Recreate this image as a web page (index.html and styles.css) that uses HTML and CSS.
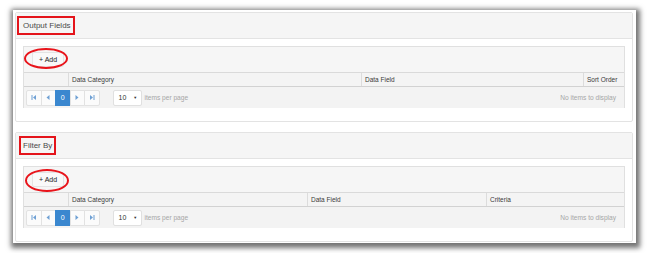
FILE: index.html
```html
<!DOCTYPE html>
<html>
<head>
<meta charset="utf-8">
<link rel="stylesheet" href="styles.css">
</head>
<body>
<div class="frame">
  <section class="panel">
    <div class="panel-head"><span class="mark mark-out">Output Fields</span></div>
    <div class="panel-body">
      <div class="grid">
        <div class="toolbar">
          <span class="add-wrap"><button class="add">+ Add</button><span class="ring"></span></span>
        </div>
        <div class="cols cols-out">
          <div class="th"></div>
          <div class="th">Data Category</div>
          <div class="th">Data Field</div>
          <div class="th">Sort Order</div>
        </div>
        <div class="pager">
          <div class="pages">
            <span class="pg"><svg width="6" height="5" viewBox="0 0 6 5"><rect x="0.5" y="0" width="1" height="5"/><path d="M5 0 L2 2.5 L5 5Z"/></svg></span>
            <span class="pg"><svg width="4" height="5" viewBox="0 0 4 5"><path d="M3.5 0 L0.5 2.5 L3.5 5Z"/></svg></span>
            <span class="pg active">0</span>
            <span class="pg"><svg width="4" height="5" viewBox="0 0 4 5"><path d="M0.5 0 L3.5 2.5 L0.5 5Z"/></svg></span>
            <span class="pg"><svg width="6" height="5" viewBox="0 0 6 5"><path d="M1 0 L4 2.5 L1 5Z"/><rect x="4.5" y="0" width="1" height="5"/></svg></span>
          </div>
          <span class="sel">10<span class="caret">▼</span></span>
          <span class="ipp">items per page</span>
          <span class="info">No items to display</span>
        </div>
      </div>
    </div>
  </section>
  <section class="panel">
    <div class="panel-head"><span class="mark mark-filter">Filter By</span></div>
    <div class="panel-body">
      <div class="grid">
        <div class="toolbar">
          <span class="add-wrap"><button class="add">+ Add</button><span class="ring ring-2"></span></span>
        </div>
        <div class="cols cols-filter">
          <div class="th"></div>
          <div class="th">Data Category</div>
          <div class="th">Data Field</div>
          <div class="th">Criteria</div>
        </div>
        <div class="pager">
          <div class="pages">
            <span class="pg"><svg width="6" height="5" viewBox="0 0 6 5"><rect x="0.5" y="0" width="1" height="5"/><path d="M5 0 L2 2.5 L5 5Z"/></svg></span>
            <span class="pg"><svg width="4" height="5" viewBox="0 0 4 5"><path d="M3.5 0 L0.5 2.5 L3.5 5Z"/></svg></span>
            <span class="pg active">0</span>
            <span class="pg"><svg width="4" height="5" viewBox="0 0 4 5"><path d="M0.5 0 L3.5 2.5 L0.5 5Z"/></svg></span>
            <span class="pg"><svg width="6" height="5" viewBox="0 0 6 5"><path d="M1 0 L4 2.5 L1 5Z"/><rect x="4.5" y="0" width="1" height="5"/></svg></span>
          </div>
          <span class="sel">10<span class="caret">▼</span></span>
          <span class="ipp">items per page</span>
          <span class="info">No items to display</span>
        </div>
      </div>
    </div>
  </section>
</div>
</body>
</html>
```

FILE: styles.css
```css
* { box-sizing: border-box; }
html, body { margin: 0; padding: 0; background: #fff; }
body {
  font-family: "Liberation Sans", Arial, sans-serif;
  color: #333;
  width: 647px;
  height: 253px;
  overflow: hidden;
}
.frame {
  margin: 10px 11px 0 13px;
  height: 233px;
  padding: 2px 3px 1px 2px;
  background: #fff;
  box-shadow: 1px 2px 5px 3px rgba(0, 0, 0, 0.55);
  display: flex;
  flex-direction: column;
  gap: 10px;
}
.panel {
  border: 1px solid #e3e3e3;
  border-radius: 2px;
  height: 110px;
  display: flex;
  flex-direction: column;
}
.panel-head {
  height: 26px;
  background: #f5f5f5;
  border-bottom: 1px solid #e3e3e3;
  display: flex;
  align-items: center;
  font-size: 8px;
  color: #4a4a4a;
}
.mark {
  border: 2px solid #e4141b;
  height: 19px;
  display: flex;
  align-items: center;
}
.mark-out { margin-left: 1px; padding: 0 2px 0 4px; }
.mark-filter { margin-left: 3px; padding: 0 2px 0 2px; }
.panel-body {
  flex: 1;
  padding: 7px 7px 0 7px;
}
.grid {
  border: 1px solid #e0e0e0;
  border-bottom: none;
}
.toolbar {
  height: 26px;
  background: #f6f6f6;
  border-bottom: 1px solid #dadada;
  display: flex;
  align-items: center;
  padding-left: 8px;
}
.add-wrap { position: relative; display: inline-flex; }
.add {
  font-family: inherit;
  font-size: 7px;
  color: #222;
  background: #f9f9f9;
  border: 1px solid #e4e4e4;
  border-radius: 2px;
  height: 15px;
  padding: 0 6px;
  margin: 0;
  line-height: 13px;
}
.ring {
  position: absolute;
  left: -8px;
  top: -4px;
  width: 44px;
  height: 21px;
  border: 2px solid #e8141b;
  border-radius: 50%;
}
.ring-2 { left: -7px; top: -3px; width: 44px; height: 23px; }
.cols {
  display: grid;
  height: 14px;
  background: #f4f4f4;
  border-bottom: 1px solid #d2d2d2;
}
.cols-out { grid-template-columns: 44px 293px 222px 1fr; }
.cols-filter { grid-template-columns: 44px 239px 179px 1fr; }
.th {
  font-size: 6.5px;
  color: #3a3a3a;
  padding-left: 3px;
  display: flex;
  align-items: center;
  border-left: 1px solid #dcdcdc;
}
.th:first-child { border-left: none; }
.pager {
  height: 21px;
  background: #f3f3f3;
  display: flex;
  align-items: center;
  padding: 0 8px 0 2px;
  font-size: 6.6px;
}
.pages { display: flex; }
.pg {
  width: 15.5px;
  height: 16px;
  background: #fbfbfb;
  border: 1px solid #e2e2e2;
  margin-left: -1px;
  display: flex;
  align-items: center;
  justify-content: center;
  fill: #6fa0d4;
}
.pg:first-child { margin-left: 0; border-radius: 2px 0 0 2px; }
.pg:last-child { border-radius: 0 2px 2px 0; }
.pg.active {
  background: #3a87cf;
  border-color: #3a87cf;
  color: #fff;
  font-size: 7px;
}
.sel {
  margin-left: 13px;
  width: 29px;
  height: 16px;
  background: #fff;
  border: 1px solid #e0e0e0;
  border-radius: 2px;
  display: flex;
  align-items: center;
  padding-left: 5px;
  font-size: 7px;
  color: #333;
}
.caret { font-size: 4px; margin-left: 7px; color: #333; }
.ipp { margin-left: 3px; color: #a6a6a6; }
.info { margin-left: auto; color: #a6a6a6; }
```
